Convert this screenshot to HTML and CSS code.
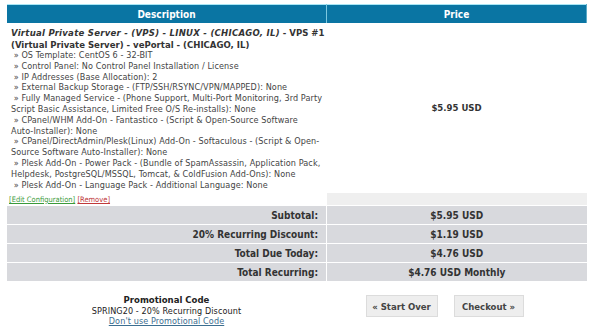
FILE: index.html
```html
<!DOCTYPE html>
<html>
<head>
<meta charset="utf-8">
<link rel="stylesheet" href="styles.css">
</head>
<body>
<div class="page">
  <table class="cart">
    <thead>
      <tr>
        <th class="col-desc">Description</th>
        <th class="col-price">Price</th>
      </tr>
    </thead>
    <tbody>
      <tr class="item">
        <td class="desc">
          <div class="title"><em>Virtual Private Server - (VPS) - LINUX - (CHICAGO, IL)</em> - VPS #1</div>
          <div class="title">(Virtual Private Server) - vePortal - (CHICAGO, IL)</div>
          <div class="opts">
            &nbsp;» OS Template: CentOS 6 - 32-BIT<br>
            &nbsp;» Control Panel: No Control Panel Installation / License<br>
            &nbsp;» IP Addresses (Base Allocation): 2<br>
            &nbsp;» External Backup Storage - (FTP/SSH/RSYNC/VPN/MAPPED): None<br>
            &nbsp;» Fully Managed Service - (Phone Support, Multi-Port Monitoring, 3rd Party Script Basic Assistance, Limited Free O/S Re-installs): None<br>
            &nbsp;» CPanel/WHM Add-On - Fantastico - (Script &amp; Open-Source Software Auto-Installer): None<br>
            &nbsp;» CPanel/DirectAdmin/Plesk(Linux) Add-On - Softaculous - (Script &amp; Open-Source Software Auto-Installer): None<br>
            &nbsp;» Plesk Add-On - Power Pack - (Bundle of SpamAssassin, Application Pack, Helpdesk, PostgreSQL/MSSQL, Tomcat, &amp; ColdFusion Add-Ons): None<br>
            &nbsp;» Plesk Add-On - Language Pack - Additional Language: None
          </div>
        </td>
        <td class="price">$5.95 USD</td>
      </tr>
      <tr class="actions">
        <td class="act-cell"><a class="edit" href="#">[Edit Configuration]</a> <a class="remove" href="#">[Remove]</a></td>
        <td class="act-price"></td>
      </tr>
      <tr class="total">
        <td class="label">Subtotal:</td>
        <td class="amount">$5.95 USD</td>
      </tr>
      <tr class="total">
        <td class="label">20% Recurring Discount:</td>
        <td class="amount">$1.19 USD</td>
      </tr>
      <tr class="total">
        <td class="label">Total Due Today:</td>
        <td class="amount">$4.76 USD</td>
      </tr>
      <tr class="total">
        <td class="label">Total Recurring:</td>
        <td class="amount">$4.76 USD Monthly</td>
      </tr>
    </tbody>
  </table>

  <div class="footer">
    <div class="promo">
      <div class="promo-title">Promotional Code</div>
      <div>SPRING20 - 20% Recurring Discount</div>
      <a href="#" class="promo-link">Don't use Promotional Code</a>
    </div>
    <div class="buttons">
      <button class="btn btn-start">« Start Over</button>
      <button class="btn btn-checkout">Checkout »</button>
    </div>
  </div>
</div>
</body>
</html>
```

FILE: styles.css
```css
html, body {
  margin: 0;
  padding: 0;
  background: #fff;
}
body {
  font-family: "DejaVu Sans Condensed", "DejaVu Sans", sans-serif;
  font-size: 9px;
  letter-spacing: 0.1px;
  color: #333;
}
.page {
  padding: 4px 13px 0 7px;
  width: 580px;
}
.cart {
  width: 580px;
  border-collapse: collapse;
  table-layout: fixed;
}
.cart th {
  background: #0a75a3;
  color: #fff;
  font-size: 10px;
  font-weight: bold;
  letter-spacing: 0;
  height: 18px;
  padding: 0;
  border-top: 1px solid #a8e6f5;
  text-align: center;
}
.col-desc {
  width: 319px;
  border-right: 1px solid #7cc8e0;
}
.col-price {
  border-right: 1px solid #5aa9c6;
}
.desc {
  padding: 4px 4px 3px 4px;
  vertical-align: top;
  line-height: 10.8px;
}
.title {
  font-weight: bold;
  font-size: 9.5px;
  line-height: 11.5px;
  letter-spacing: 0;
  white-space: nowrap;
  color: #333;
}
.title em {
  letter-spacing: 0.25px;
}
.opts {
  color: #444;
}
.price {
  text-align: center;
  vertical-align: middle;
  font-weight: bold;
  font-size: 9.5px;
  letter-spacing: 0;
  color: #333;
  padding-bottom: 2px;
}
.actions td {
  height: 12px;
  padding: 0 0 0 2px;
  font-size: 7.5px;
  letter-spacing: 0;
  vertical-align: middle;
}
.act-price {
  background: #efefef;
  border-left: 1px solid #fff;
}
.edit {
  color: #3a9a3a;
}
.remove {
  color: #c0393b;
}
.total td {
  background: #d8d9dd;
  height: 18px;
  padding: 0;
  border-top: 1px solid #fff;
  font-weight: bold;
  font-size: 10px;
  letter-spacing: 0;
  color: #333;
}
.total .label {
  text-align: right;
  padding-right: 8px;
  border-right: 1px solid #fff;
}
.total .amount {
  text-align: center;
}
.footer {
  display: grid;
  grid-template-columns: 319px 261px;
  margin-top: 14px;
}
.promo {
  text-align: center;
  font-size: 9px;
  line-height: 10.5px;
  letter-spacing: 0.1px;
  color: #222;
}
.promo-title {
  font-weight: bold;
  font-size: 9.5px;
  letter-spacing: 0;
}
.promo-link {
  color: #3c6e90;
}
.buttons {
  display: flex;
  justify-content: center;
  gap: 16px;
  padding-right: 24px;
  padding-top: 0;
}
.btn {
  font-family: "DejaVu Sans Condensed", "DejaVu Sans", sans-serif;
  font-weight: bold;
  font-size: 9.5px;
  color: #444;
  background: #eeeeee;
  border: 1px solid #dcdcdc;
  height: 22px;
  padding: 0;
}
.btn-start {
  width: 72px;
}
.btn-checkout {
  width: 70px;
}
```
